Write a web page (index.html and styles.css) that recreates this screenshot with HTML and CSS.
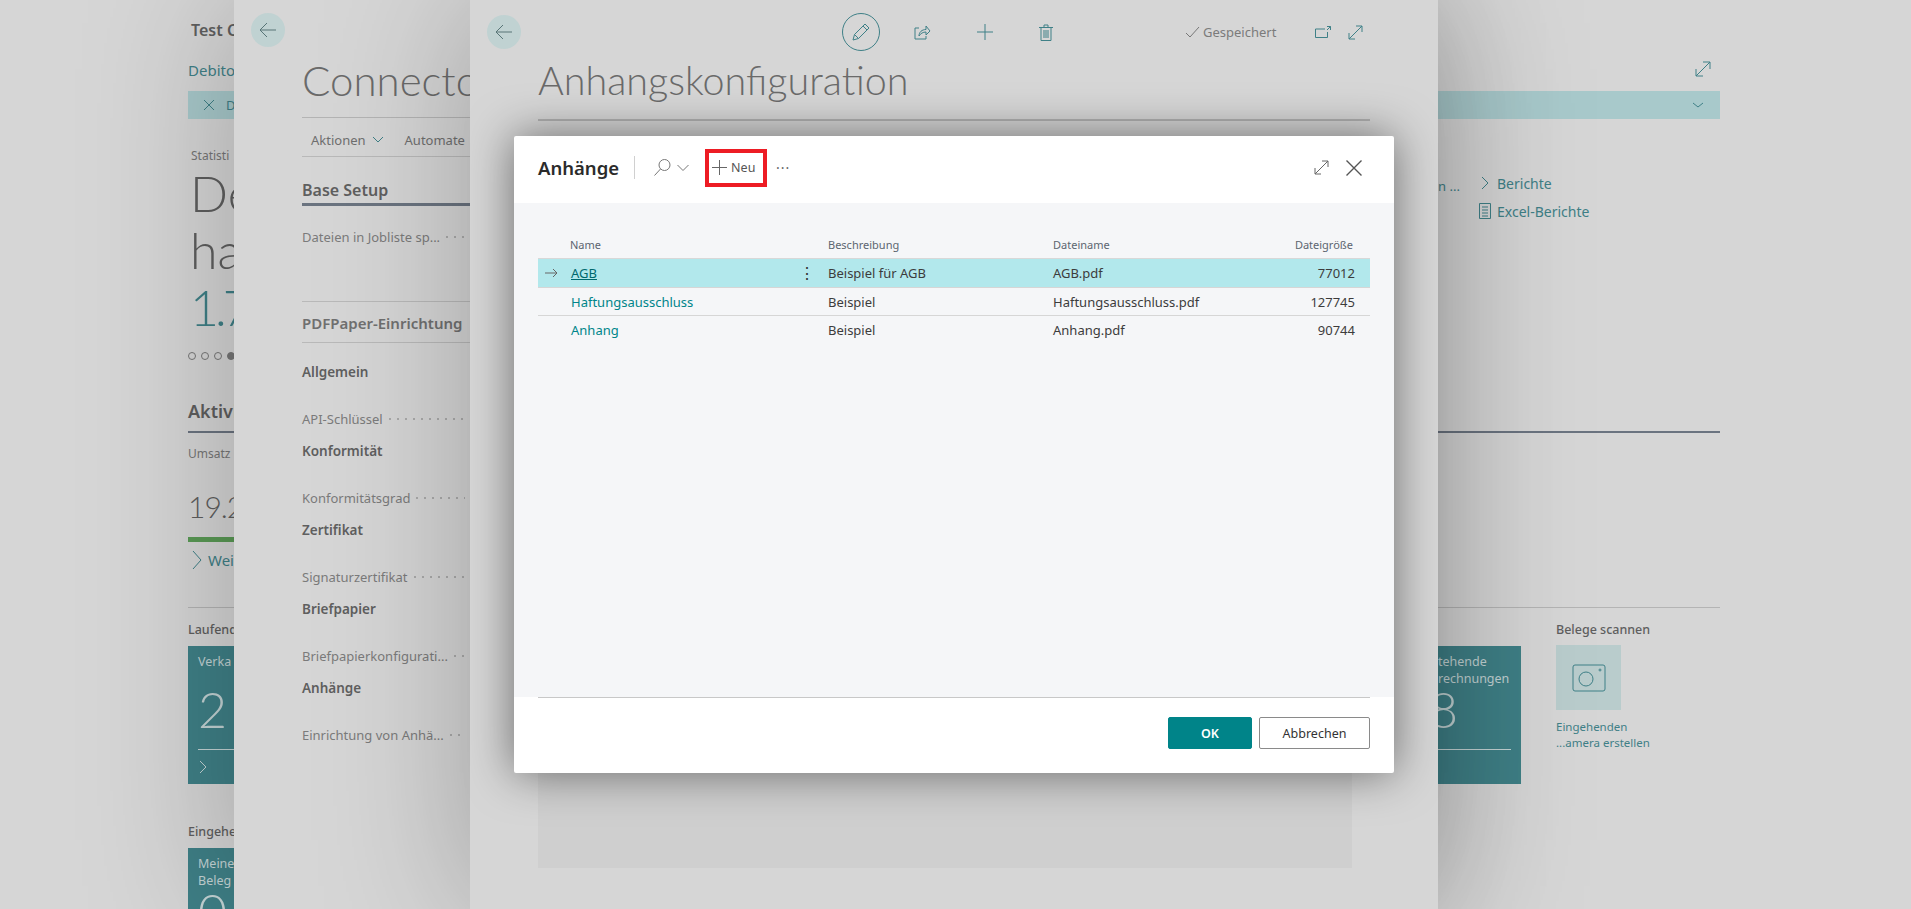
FILE: index.html
```html
<!DOCTYPE html>
<html lang="de">
<head>
    <meta charset="UTF-8">
    <meta name="viewport" content="width=device-width, initial-scale=1.0">
    <title>Anhänge</title>
    <link rel="stylesheet" href="styles.css">
</head>
<body>
    <!-- page underneath: customer role center -->
    <div class="page">
        <div class="page-head">
            <div>
                <div class="company">Test C</div>
                <div class="page-link">Debito</div>
            </div>
            <svg class="ico page-expand" width="18" height="18" viewBox="0 0 18 18"><path d="M2 16 16 2M9 2h7v7M2 9v7h7"/></svg>
        </div>
        <div class="page-bar">
            <svg class="ico" width="14" height="14" viewBox="0 0 14 14"><path d="M2 2l10 10M12 2 2 12"/></svg>
            <span class="page-bar-text">D</span>
            <svg class="ico" width="14" height="14" viewBox="0 0 14 14"><path d="M2 5l5 4 5-4"/></svg>
        </div>
        <div class="stats-row">
            <div>
                <div class="stats-label">Statisti</div>
                <div class="stats-big">De<br>ha</div>
                <div class="stats-big teal">1.7</div>
                <div class="dots"><i></i><i></i><i></i><i class="on"></i></div>
            </div>
            <div class="report-links">
                <span class="cut-link">n ...</span>
                <div>
                    <div class="report-link">
                        <svg class="ico" width="12" height="14" viewBox="0 0 12 14"><path d="M3 1l6 6-6 6"/></svg>
                        <span>Berichte</span>
                    </div>
                    <div class="report-link">
                        <svg class="ico" width="12" height="16" viewBox="0 0 12 16"><path d="M.5.5h11v15H.5zM3 4h6M3 7h6M3 10h6M3 13h6"/></svg>
                        <span>Excel-Berichte</span>
                    </div>
                </div>
            </div>
        </div>
        <div class="section-title">Aktivi</div>
        <div class="stats-label umsatz">Umsatz</div>
        <div class="amount">19.2</div>
        <div class="green-bar"></div>
        <div class="more-link">
            <svg class="ico" width="12" height="20" viewBox="0 0 12 20"><path d="M2 1l8 9-8 9"/></svg>
            <span>Weit</span>
        </div>
        <div class="tile-groups">
            <div>
                <div class="group-title">Laufend</div>
                <div class="tile">
                    <div class="tile-name">Verka</div>
                    <div class="tile-num">2</div>
                    <div class="tile-foot"><svg class="ico" width="10" height="14" viewBox="0 0 10 14"><path d="M2 1l6 6-6 6"/></svg></div>
                </div>
                <div class="group-title second">Eingehe</div>
                <div class="tile">
                    <div class="tile-name">Meine<br>Beleg</div>
                    <div class="tile-num">0</div>
                </div>
            </div>
            <div class="right-groups">
                <div class="tile tile-right">
                    <div class="tile-name">tehende<br>rechnungen</div>
                    <div class="tile-num">8</div>
                    <div class="tile-foot"></div>
                </div>
                <div class="scan-group">
                    <div class="group-title">Belege scannen</div>
                    <div class="scan-tile">
                        <svg class="ico" width="34" height="28" viewBox="0 0 34 28"><rect x="1" y="1" width="32" height="26" rx="2"/><circle cx="14" cy="15" r="7"/><circle cx="28" cy="6" r="1"/></svg>
                    </div>
                    <div class="scan-text">Eingehenden<br>...amera erstellen</div>
                </div>
            </div>
        </div>
    </div>

    <!-- second slide-in: connector setup -->
    <div class="panel panel-setup">
        <div class="back"><svg class="ico" width="18" height="16" viewBox="0 0 18 16"><path d="M17 8H1M8 1 1 8l7 7"/></svg></div>
        <div class="panel-title">Connector</div>
        <div class="menu-row">
            <span>Aktionen</span>
            <svg class="ico" width="12" height="8" viewBox="0 0 12 8"><path d="M1 1l5 5 5-5"/></svg>
            <span class="menu-next">Automate</span>
        </div>
        <div class="fast-head">Base Setup</div>
        <div class="field first"><span>Dateien in Jobliste sp...</span><i class="leader"></i></div>
        <div class="fast-head muted">PDFPaper-Einrichtung</div>
        <div class="group-label first-label">Allgemein</div>
        <div class="field"><span>API-Schlüssel</span><i class="leader"></i></div>
        <div class="group-label">Konformität</div>
        <div class="field"><span>Konformitätsgrad</span><i class="leader"></i></div>
        <div class="group-label">Zertifikat</div>
        <div class="field"><span>Signaturzertifikat</span><i class="leader"></i></div>
        <div class="group-label">Briefpapier</div>
        <div class="field"><span>Briefpapierkonfigurati...</span><i class="leader"></i></div>
        <div class="group-label">Anhänge</div>
        <div class="field"><span>Einrichtung von Anhä...</span><i class="leader"></i></div>
    </div>

    <!-- third slide-in: attachment config -->
    <div class="panel panel-config">
        <div class="config-top">
            <div class="back back-config"><svg class="ico" width="18" height="16" viewBox="0 0 18 16"><path d="M17 8H1M8 1 1 8l7 7"/></svg></div>
            <div class="pencil"><svg class="ico" width="20" height="20" viewBox="0 0 20 20"><path d="M2 18l1.500-5.500L14 2l4 4L7.500 16.500zM3.500 12.500l4 4M12 4l4 4"/></svg></div>
            <svg class="ico tool-share" width="17" height="15" viewBox="0 0 17 15"><path d="M5 3H1v11h11v-3M5 11c0-4 3-6.500 7-6.500V1l4 5-4 4V7c-3 0-5.500 1.500-7 4z"/></svg>
            <svg class="ico tool-plus" width="16" height="16" viewBox="0 0 16 16"><path d="M8 0v16M0 8h16"/></svg>
            <svg class="ico tool-trash" width="14" height="17" viewBox="0 0 14 17"><path d="M2 3.500h10v13H2zM0 3.500h14M5 3.500V1h4v2.500M5 6v8M7 6v8M9 6v8"/></svg>
            <svg class="ico-grey tool-check" width="15" height="12" viewBox="0 0 15 12"><path d="M1 7l4 4L14 1"/></svg>
            <span class="saved">Gespeichert</span>
            <svg class="ico tool-open" width="16" height="12" viewBox="0 0 16 12"><path d="M10 3H.5v8.500h12V6M12 .5h3.500V4M15.500.5 12 4"/></svg>
            <svg class="ico tool-expand" width="15" height="15" viewBox="0 0 15 15"><path d="M1 14 14 1M8 1h6v6M1 8v6h6"/></svg>
        </div>
        <div class="config-title">Anhangskonfiguration</div>
        <div class="config-area"></div>
    </div>

    <!-- dialog -->
    <div class="dialog">
        <div class="dialog-head">
            <span class="dialog-title">Anhänge</span>
            <span class="head-sep"></span>
            <svg class="ico-grey" width="17" height="17" viewBox="0 0 17 17"><circle cx="10.500" cy="6" r="5.500"/><path d="M6.500 10 .5 16.500"/></svg>
            <svg class="ico-grey head-chevron" width="12" height="8" viewBox="0 0 12 8"><path d="M.5 1l5.500 5.500L11.500 1"/></svg>
            <button class="new-btn">
                <svg class="ico-dark" width="15" height="15" viewBox="0 0 15 15"><path d="M7.500 0v15M0 7.500h15"/></svg>
                <span>Neu</span>
            </button>
            <span class="more">···</span>
            <span class="head-right">
                <svg class="ico-dark" width="15" height="15" viewBox="0 0 15 15"><path d="M1 14 14 1M8 1h6v6M1 8v6h6"/></svg>
                <svg class="ico-close" width="16" height="16" viewBox="0 0 16 16"><path d="M.5.5l15 15M15.500.5l-15 15"/></svg>
            </span>
        </div>
        <div class="dialog-body">
            <div class="grid-row grid-head">
                <span class="cell-name">Name</span>
                <span class="cell-desc">Beschreibung</span>
                <span class="cell-file">Dateiname</span>
                <span class="cell-size">Dateigröße</span>
            </div>
            <div class="grid-row grid-item selected">
                <svg class="ico-dark row-arrow" width="13" height="10" viewBox="0 0 13 10"><path d="M0 5h12M8 1l4 4-4 4"/></svg>
                <a class="cell-name link" href="#">AGB</a>
                <span class="kebab">⋮</span>
                <span class="cell-desc">Beispiel für AGB</span>
                <span class="cell-file">AGB.pdf</span>
                <span class="cell-size">77012</span>
            </div>
            <div class="grid-row grid-item">
                <a class="cell-name" href="#">Haftungsausschluss</a>
                <span class="cell-desc">Beispiel</span>
                <span class="cell-file">Haftungsausschluss.pdf</span>
                <span class="cell-size">127745</span>
            </div>
            <div class="grid-row grid-item last">
                <a class="cell-name" href="#">Anhang</a>
                <span class="cell-desc">Beispiel</span>
                <span class="cell-file">Anhang.pdf</span>
                <span class="cell-size">90744</span>
            </div>
        </div>
        <div class="dialog-foot">
            <button class="btn btn-ok">OK</button>
            <button class="btn">Abbrechen</button>
        </div>
    </div>
</body>
</html>
```

FILE: styles.css
```css
* {
    box-sizing: border-box;
}
html, body {
    margin: 0;
    height: 909px;
    overflow: hidden;
}
body {
    position: relative;
    font-family: "Noto Sans", "Open Sans", sans-serif;
    font-size: 13px;
    background: #d6d6d6;
    color: #5f5f5f;
}
svg {
    display: block;
    flex: none;
}
.ico, .ico-grey, .ico-dark, .ico-close {
    fill: none;
    stroke-width: 1;
}
.ico {
    stroke: #3f8087;
}
.ico-grey {
    stroke: #777;
}
.ico-dark {
    stroke: #666;
}
.ico-close {
    stroke: #555;
    stroke-width: 1.4;
}

/* page underneath */
.page {
    height: 909px;
    padding: 0 191px 0 188px;
    overflow: hidden;
}
.page-head {
    display: flex;
    justify-content: space-between;
    align-items: flex-end;
}
.company {
    margin: 19px 0 0 3px;
    font-size: 16px;
    line-height: 22px;
    font-weight: 600;
}
.page-link {
    margin-top: 18px;
    font-size: 15px;
    line-height: 22px;
    color: #3f8087;
}
.page-expand {
    margin: 0 8px 3px 0;
}
.page-bar {
    display: flex;
    align-items: center;
    height: 28px;
    margin-top: 10px;
    padding: 0 15px 0 14px;
    background: #a8c9cb;
    color: #3f8087;
}
.page-bar-text {
    flex: 1;
    margin-left: 10px;
}
.stats-row {
    display: flex;
    justify-content: space-between;
    height: 279px;
}
.stats-label {
    margin: 28px 0 0 3px;
    font-size: 12px;
    line-height: 18px;
    color: #777;
}
.stats-big {
    font-family: Lato, "Noto Sans", sans-serif;
    font-size: 50px;
    line-height: 57px;
    font-weight: 300;
    margin-left: 2px;
}
.stats-big:first-of-type {
    margin-top: 23px;
}
.teal {
    color: #3f8087;
    letter-spacing: -4px;
}
.dots {
    display: flex;
    gap: 5px;
    margin-top: 16px;
}
.dots i {
    width: 8px;
    height: 8px;
    border: 1px solid #777;
    border-radius: 50%;
}
.dots .on {
    background: #777;
}
.report-links {
    display: flex;
    justify-content: space-between;
    width: 282px;
    padding-top: 50px;
    color: #3f8087;
}
.cut-link {
    margin-top: 8px;
    font-size: 13px;
}
.report-link {
    display: flex;
    align-items: center;
    gap: 6px;
    width: 241px;
    height: 28px;
    font-size: 14px;
}
.section-title {
    padding-bottom: 7px;
    border-bottom: 2px solid #6b7480;
    font-size: 18px;
    line-height: 26px;
    font-weight: 600;
}
.umsatz {
    margin: 12px 0 0;
}
.amount {
    margin-top: 23px;
    font-family: Lato, "Noto Sans", sans-serif;
    font-size: 30px;
    line-height: 40px;
    font-weight: 300;
    letter-spacing: -1px;
}
.green-bar {
    width: 100px;
    height: 5px;
    margin-top: 11px;
    background: #5a9a55;
}
.more-link {
    display: flex;
    align-items: center;
    gap: 5px;
    height: 24px;
    margin: 6px 0 0 3px;
    font-size: 15px;
    color: #3f8087;
}
.tile-groups {
    display: flex;
    justify-content: space-between;
    margin-top: 35px;
    border-top: 1px solid #b4b4b4;
}
.group-title {
    margin-top: 13px;
    font-size: 12.5px;
    line-height: 18px;
    font-weight: 500;
}
.group-title.second {
    margin-top: 39px;
}
.tile {
    width: 120px;
    height: 138px;
    margin-top: 7px;
    padding: 0 10px;
    background: #3f8087;
    color: #c4d4d5;
}
.tile-name {
    height: 41px;
    padding-top: 7px;
    font-size: 12.5px;
    line-height: 17px;
    white-space: nowrap;
}
.tile-num {
    height: 44px;
    font-family: Lato, "Noto Sans", sans-serif;
    font-size: 50px;
    line-height: 44px;
    font-weight: 300;
}
.tile-foot {
    height: 35px;
    padding-top: 10px;
    margin-top: 18px;
    border-top: 1px solid #c4d4d5;
}
.tile-foot .ico {
    stroke: #c4d4d5;
}
.right-groups {
    display: flex;
    gap: 35px;
}
.tile-right {
    width: 128px;
    margin-top: 38px;
}
.tile-right .tile-name {
    padding-left: 35px;
}
.tile-right .tile-num {
    padding-left: 26px;
}
.scan-group {
    width: 164px;
}
.scan-tile {
    display: flex;
    align-items: center;
    justify-content: center;
    width: 65px;
    height: 65px;
    margin-top: 6px;
    background: #b9cccc;
}
.scan-text {
    margin-top: 9px;
    font-size: 11.5px;
    line-height: 16px;
    color: #3f8087;
}

/* slide-in panels */
.panel {
    position: absolute;
    top: 0;
    bottom: 0;
    overflow: hidden;
    background: #d6d6d6;
    box-shadow: 0 0 140px rgba(0, 0, 0, .26);
}
.panel-setup {
    left: 234px;
    width: 1160px;
    padding: 13px 0 0 68px;
}
.panel-config {
    left: 470px;
    width: 968px;
    padding: 13px 68px 0;
    overflow: visible;
}
.back {
    display: flex;
    align-items: center;
    justify-content: center;
    width: 34px;
    height: 34px;
    margin-left: -51px;
    border-radius: 50%;
    background: #c0d2d2;
}
.back .ico {
    stroke: #587577;
}
.panel-title, .config-title {
    font-family: Lato, "Noto Sans", sans-serif;
    font-size: 42px;
    line-height: 56px;
    font-weight: 300;
    color: #6a6a6a;
    white-space: nowrap;
}
.panel-title {
    margin-top: 5px;
    padding-bottom: 9px;
    border-bottom: 1px solid #b4b4b4;
    width: 800px;
}
.menu-row {
    display: flex;
    align-items: center;
    gap: 6px;
    width: 800px;
    height: 39px;
    padding: 5px 0 0 9px;
    border-bottom: 1px solid #b9b9b9;
    font-size: 13px;
    color: #6f6f6f;
}
.menu-next {
    margin-left: 15px;
}
.fast-head {
    width: 800px;
    margin-top: 21px;
    border-bottom: 3px solid #6b7480;
    font-size: 16px;
    line-height: 25px;
    font-weight: 600;
}
.fast-head.muted {
    margin-top: 0;
    padding: 9px 0 6px;
    border-top: 1px solid #b9b9b9;
    border-bottom: 1px solid #b9b9b9;
    font-size: 15px;
    color: #707070;
}
.group-label {
    height: 20px;
    margin-top: 12px;
    font-size: 13.5px;
    line-height: 20px;
    font-weight: 600;
}
.first-label {
    margin-top: 19px;
}
.field {
    display: flex;
    align-items: center;
    gap: 6px;
    width: 163px;
    height: 20px;
    margin-top: 27px;
    font-size: 13px;
    line-height: 20px;
    color: #7b7b7b;
    white-space: nowrap;
}
.field.first {
    margin-top: 21px;
    margin-bottom: 54px;
}
.leader {
    flex: 1;
    min-width: 0;
    height: 2px;
    background: repeating-linear-gradient(90deg, #aaa 0 2px, transparent 2px 8px);
}

/* config panel */
.config-top {
    display: flex;
    align-items: center;
    height: 38px;
}
.back-config {
    margin: 0 321px 0 -51px;
}
.pencil {
    display: flex;
    align-items: center;
    justify-content: center;
    width: 38px;
    height: 38px;
    border: 1px solid #3f8087;
    border-radius: 50%;
}
.tool-share {
    margin-left: 34px;
}
.tool-plus {
    margin-left: 46px;
}
.tool-trash {
    margin-left: 46px;
}
.tool-check {
    margin-left: 132px;
}
.saved {
    margin-left: 3px;
    font-size: 13px;
    color: #7b7b7b;
}
.tool-open {
    margin-left: 39px;
}
.tool-expand {
    margin-left: 17px;
}
.config-title {
    margin-top: 1px;
    padding-bottom: 11px;
    border-bottom: 2px solid #b0b0b0;
    font-size: 39.500px;
}
.config-area {
    width: 814px;
    height: 660px;
    margin-top: 87px;
    background: #cfcfcf;
}

/* dialog */
.dialog {
    position: absolute;
    left: 514px;
    top: 136px;
    display: flex;
    flex-direction: column;
    width: 880px;
    height: 637px;
    border-radius: 2px;
    background: #fff;
    box-shadow: 0 0 45px rgba(0, 0, 0, .5);
    color: #3c3c3c;
}
.dialog-head {
    display: flex;
    align-items: center;
    height: 67px;
    padding: 0 24px 4px;
}
.dialog-title {
    font-size: 18.500px;
    font-weight: 600;
    color: #2b2b2b;
}
.head-sep {
    width: 1px;
    height: 23px;
    margin: 0 19px 0 15px;
    background: #d0d0d0;
}
.head-chevron {
    margin-left: 6px;
}
.new-btn {
    display: flex;
    align-items: center;
    gap: 4px;
    width: 62px;
    height: 38px;
    margin-left: 16px;
    padding: 0 0 0 3px;
    border: 4px solid #ed1c24;
    background: #fff;
    font: inherit;
    font-size: 12.500px;
    color: #555;
}
.more {
    margin-left: 9px;
    font-size: 14px;
    letter-spacing: 1px;
    color: #666;
}
.head-right {
    display: flex;
    align-items: center;
    gap: 17px;
    margin-left: auto;
    padding-right: 8px;
}
.dialog-body {
    flex: 1;
    padding: 0 24px;
    background: #f5f6f8;
}
.grid-row {
    display: grid;
    grid-template-columns: 33px 215px 42px 225px 1fr 120px;
    align-items: center;
}
.grid-head {
    height: 56px;
    padding-top: 27px;
    border-bottom: 1px solid #d8d8d8;
    font-size: 11px;
    color: #5c6570;
}
.grid-head .cell-name {
    margin-left: -1px;
    color: #5c6570;
}
.grid-head .cell-size {
    padding-right: 17px;
}
.grid-item {
    height: 28px;
    border-bottom: 1px solid #d6d6d6;
}
.grid-item.last {
    border-bottom: none;
}
.selected {
    height: 29px;
    background: #b2e8ec;
}
.cell-name {
    grid-column: 2;
    grid-row: 1;
    color: #00858a;
    text-decoration: none;
}
.link {
    color: #00696e;
    text-decoration: underline;
}
.row-arrow {
    grid-column: 1;
    grid-row: 1;
    margin-left: 7px;
}
.kebab {
    grid-column: 3;
    grid-row: 1;
    font-size: 16px;
    text-align: center;
    color: #333;
}
.cell-desc {
    grid-column: 4;
    grid-row: 1;
}
.cell-file {
    grid-column: 5;
    grid-row: 1;
}
.cell-size {
    grid-column: 6;
    grid-row: 1;
    padding-right: 15px;
    text-align: right;
}
.dialog-foot {
    display: flex;
    justify-content: flex-end;
    gap: 7px;
    height: 76px;
    margin: 0 24px;
    padding-top: 19px;
    border-top: 1px solid #c8c8c8;
}
.btn {
    width: 111px;
    height: 32px;
    border: 1px solid #8a8a8a;
    border-radius: 2px;
    background: #fff;
    font: inherit;
    font-size: 12.500px;
    color: #333;
}
.btn-ok {
    width: 84px;
    border-color: #008489;
    background: #008489;
    font-weight: 600;
    color: #fff;
}
```
